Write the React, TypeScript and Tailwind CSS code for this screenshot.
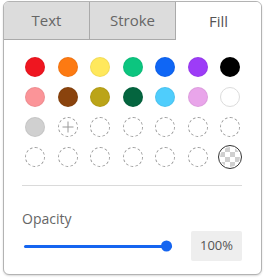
const swatches: { color?: string; kind?: 'solid' | 'white' | 'empty' | 'add' | 'clear' }[] = [
  { color: '#ef1620' },
  { color: '#fd7a12' },
  { color: '#ffe85c' },
  { color: '#0cc57f' },
  { color: '#0f66f5' },
  { color: '#9d3cf7' },
  { color: '#000000' },
  { color: '#fb9498' },
  { color: '#8a430d' },
  { color: '#bba418' },
  { color: '#04653f' },
  { color: '#4fcdfc' },
  { color: '#e9a5ea' },
  { kind: 'white' },
  { color: '#d0d0d0' },
  { kind: 'add' },
  { kind: 'empty' },
  { kind: 'empty' },
  { kind: 'empty' },
  { kind: 'empty' },
  { kind: 'empty' },
  { kind: 'empty' },
  { kind: 'empty' },
  { kind: 'empty' },
  { kind: 'empty' },
  { kind: 'empty' },
  { kind: 'empty' },
  { kind: 'clear' },
]

function Swatch({ color, kind }: { color?: string; kind?: string }) {
  if (kind === 'white') {
    return <div className="h-5 w-5 rounded-full border border-[#dcdcdc] bg-white" />
  }
  if (kind === 'empty') {
    return <div className="h-5 w-5 rounded-full border border-dashed border-[#9a9a9a]" />
  }
  if (kind === 'add') {
    return (
      <div className="relative flex h-5 w-5 items-center justify-center rounded-full border border-dashed border-[#9a9a9a]">
        <svg width="12" height="12" viewBox="0 0 12 12">
          <path d="M6 0.5V11.5M0.5 6H11.5" stroke="#9a9a9a" strokeWidth="1" />
        </svg>
      </div>
    )
  }
  if (kind === 'clear') {
    return (
      <div className="h-5 w-5 rounded-full bg-[conic-gradient(#cfcfcf_25%,#ffffff_0_50%,#cfcfcf_0_75%,#ffffff_0)] bg-[length:10px_10px] outline outline-1 outline-offset-[1.5px] outline-[#333]" />
    )
  }
  return <div className="h-5 w-5 rounded-full border border-black/5" style={{ backgroundColor: color }} />
}

export default function App() {
  return (
    <div className="h-[278px] w-[265px] bg-white pt-[1px] pl-[3px] font-['Open_Sans',sans-serif]">
      <div className="h-[274px] w-[259px] overflow-hidden rounded-[6px] border border-[#b3b3b3] bg-white shadow-[0_1px_2px_rgba(0,0,0,0.15)]">
        <div className="flex h-[38px] text-[15px] text-[#666]">
          <div className="flex flex-1 items-center justify-center border-r border-b border-[#aaa] bg-[#dcdcdc]">Text</div>
          <div className="flex flex-1 items-center justify-center border-r border-b border-[#aaa] bg-[#dcdcdc]">Stroke</div>
          <div className="flex flex-1 items-center justify-center bg-white text-[#555]">Fill</div>
        </div>
        <div className="px-[18px] pt-[17px]">
          <div className="grid grid-cols-[repeat(7,20px)] gap-x-[12.5px] gap-y-[10px] pl-[3px]">
            {swatches.map((s, i) => (
              <Swatch key={i} color={s.color} kind={s.kind} />
            ))}
          </div>
          <div className="mt-[18px] h-px w-[220px] bg-[#dadada]" />
          <div className="mt-[23px] text-[14px] leading-[19px] text-[#666]">Opacity</div>
          <div className="mt-[3px] flex items-center">
            <div className="relative ml-[2px] h-[3px] w-[148px] rounded-full bg-[#1565f0]">
              <div className="absolute top-1/2 right-0 h-[11px] w-[11px] -translate-y-1/2 rounded-full bg-[#1565f0]" />
            </div>
            <div className="ml-[19px] flex h-[30px] w-[51px] items-center justify-center rounded-[2px] bg-[#eeeeee] text-[13px] text-[#555]">
              100%
            </div>
          </div>
        </div>
      </div>
    </div>
  )
}
